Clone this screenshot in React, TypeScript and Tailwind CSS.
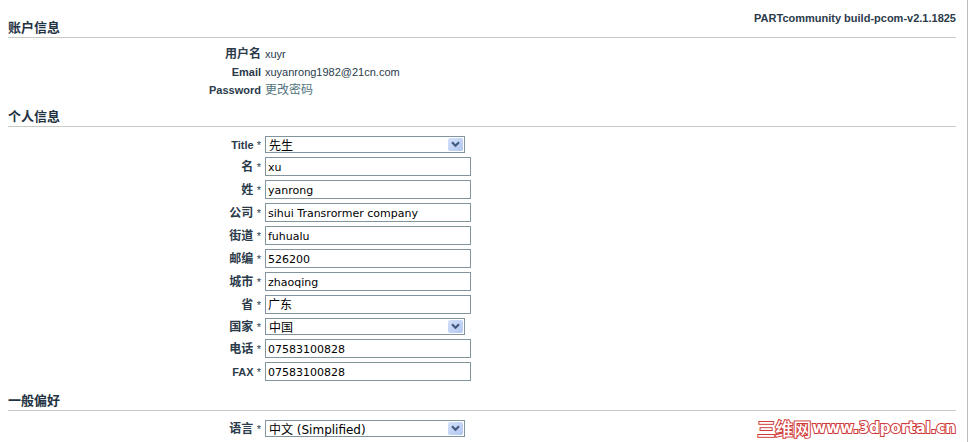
import React, { useState } from "react";

const labelClass = "text-right font-bold whitespace-nowrap text-[#2b3b4a]";

type SectionProps = {
  title: string;
  aside?: string;
  className: string;
  children: React.ReactNode;
};

function Section({ title, aside, className, children }: SectionProps) {
  return (
    <section>
      <div className="flex items-end justify-between border-b border-[#c9c9c5] pb-px">
        <h2 className="text-[13px] leading-4 font-bold text-[#1f3342]">{title}</h2>
        {aside && <p className="mb-3 text-[11px] leading-3 font-bold text-[#2b3b4a]">{aside}</p>}
      </div>
      <div className={className}>{children}</div>
    </section>
  );
}

type InfoProps = {
  label: string;
  latin?: boolean;
  children: React.ReactNode;
};

function InfoRow({ label, latin, children }: InfoProps) {
  return (
    <div className="grid grid-cols-[253px_1fr] items-center gap-1">
      <dt className={`${labelClass} leading-[18px] ${latin ? "text-[11px]" : "text-xs"}`}>{label}</dt>
      <dd className="leading-[18px]">{children}</dd>
    </div>
  );
}

type FieldProps = {
  id: string;
  label: string;
  latin?: boolean;
};

function FieldRow({ id, label, latin, children }: FieldProps & { children: React.ReactNode }) {
  return (
    <div className="grid grid-cols-[253px_1fr] items-center gap-1">
      <label htmlFor={id} className={`${labelClass} leading-4 ${latin ? "text-[11px]" : "text-xs"}`}>
        {label} <span className="text-[11px] font-normal">*</span>
      </label>
      {children}
    </div>
  );
}

function TextField({ id, label, latin, initial, large }: FieldProps & { initial: string; large?: boolean }) {
  const [value, setValue] = useState(initial);

  return (
    <FieldRow id={id} label={label} latin={latin}>
      <input
        type="text"
        id={id}
        value={value}
        onChange={(e) => setValue(e.target.value)}
        className={`h-[19px] w-[206px] border border-[#82959f] bg-white px-0.5 font-['DejaVu_Sans','Noto_Sans_CJK_SC',sans-serif] text-black ${
          large ? "pb-0.5 text-xs" : "pt-px text-[11px]"
        }`}
      />
    </FieldRow>
  );
}

function SelectField({ id, label, latin, options }: FieldProps & { options: string[] }) {
  return (
    <FieldRow id={id} label={label} latin={latin}>
      <div className="relative h-[17px] w-[200px]">
        <select
          id={id}
          defaultValue={options[0]}
          className="block h-full w-full appearance-none border border-[#82959f] bg-white pt-0.5 pr-4 pl-[3px] font-['DejaVu_Sans','Noto_Sans_CJK_SC',sans-serif] text-xs leading-[15px] text-black"
        >
          {options.map((option) => (
            <option key={option}>{option}</option>
          ))}
        </select>
        <span className="pointer-events-none absolute top-0.5 right-0.5 flex h-[13px] w-[15px] items-center justify-center rounded-xs bg-linear-to-br from-[#d5e1fb] to-[#b1c6ef]">
          <svg width="9" height="7" viewBox="0 0 9 7" fill="none">
            <path d="M1 1.2L4.5 4.7L8 1.2" stroke="#43597f" strokeWidth="2.2" />
          </svg>
        </span>
      </div>
    </FieldRow>
  );
}

function App() {
  return (
    <div className="relative min-h-screen bg-white pr-2 font-['Liberation_Sans','Noto_Sans_CJK_SC',sans-serif] text-[11px] text-[#2b3b4a]">
      <main className="min-h-screen border-r border-[#bdbdbd] pt-3 pr-[11px] pl-2">
        <Section title="账户信息" aside="PARTcommunity build-pcom-v2.1.1825" className="pt-[7px] pb-2.5">
          <dl>
            <InfoRow label="用户名">xuyr</InfoRow>
            <InfoRow label="Email" latin>
              xuyanrong1982@21cn.com
            </InfoRow>
            <InfoRow label="Password" latin>
              <a href="#password" className="block text-xs leading-[18px] text-[#527480]">
                更改密码
              </a>
            </InfoRow>
          </dl>
        </Section>

        <Section title="个人信息" className="flex flex-col gap-1 pt-[9px] pb-3">
          <SelectField id="title" label="Title" latin options={["先生", "女士"]} />
          <TextField id="firstName" label="名" initial="xu" />
          <TextField id="lastName" label="姓" initial="yanrong" />
          <TextField id="company" label="公司" initial="sihui Transrormer company" />
          <TextField id="street" label="街道" initial="fuhualu" />
          <TextField id="zip" label="邮编" initial="526200" />
          <TextField id="city" label="城市" initial="zhaoqing" />
          <TextField id="state" label="省" initial="广东" large />
          <SelectField id="country" label="国家" options={["中国"]} />
          <TextField id="phone" label="电话" initial="07583100828" />
          <TextField id="fax" label="FAX" latin initial="07583100828" />
        </Section>

        <Section title="一般偏好" className="pt-[9px]">
          <SelectField id="language" label="语言" options={["中文 (Simplified)", "English"]} />
        </Section>
      </main>

      {/* site watermark */}
      <div className="absolute right-5 bottom-[5px] flex items-center gap-px font-bold whitespace-nowrap text-white [-webkit-text-stroke:2px_#cf3a3a] [paint-order:stroke_fill]">
        <span className="font-['Noto_Sans_CJK_SC',sans-serif] text-lg leading-[18px] font-medium">三维网</span>
        <span className="font-['DejaVu_Sans',sans-serif] text-[15px] leading-[18px]">www.3dportal.cn</span>
      </div>
    </div>
  );
}

export default App;
